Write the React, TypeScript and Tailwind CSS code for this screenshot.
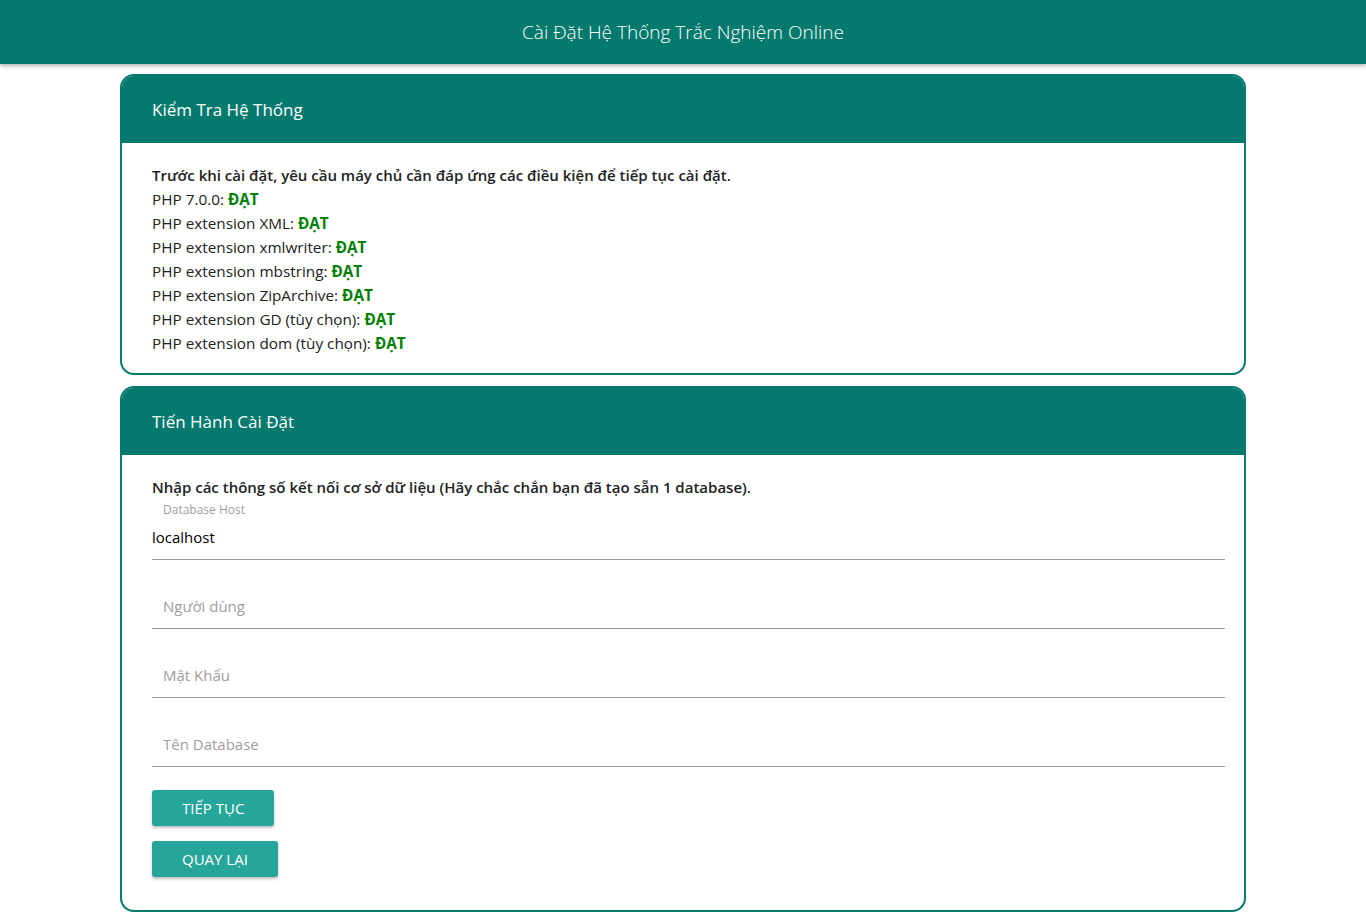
import React from 'react';

const checks = [
  'PHP 7.0.0:',
  'PHP extension XML:',
  'PHP extension xmlwriter:',
  'PHP extension mbstring:',
  'PHP extension ZipArchive:',
  'PHP extension GD (tùy chọn):',
  'PHP extension dom (tùy chọn):',
];

const fields = ['Người dùng', 'Mật Khẩu', 'Tên Database'];

export default function App() {
  return (
    <div className="min-h-screen bg-white text-[#212121] font-['Open_Sans','Noto_Sans',sans-serif]">
      <header className="h-16 bg-[#04796e] shadow-[0_2px_4px_rgba(0,0,0,0.3)] flex items-center justify-center">
        <h1 className="text-white text-[19px] font-light">Cài Đặt Hệ Thống Trắc Nghiệm Online</h1>
      </header>

      <main className="w-[1126px] mx-auto pt-[10px] flex flex-col gap-[11px]">
        <section className="border-2 border-[#04796e] rounded-[14px] overflow-hidden">
          <div className="h-[67px] bg-[#04796e] px-[30px] flex items-center text-white text-[17px]">
            Kiểm Tra Hệ Thống
          </div>
          <div className="px-[30px] pt-5 pb-[18px] text-[15.3px] leading-6">
            <p className="font-semibold text-[15px]">Trước khi cài đặt, yêu cầu máy chủ cần đáp ứng các điều kiện để tiếp tục cài đặt.</p>
            {checks.map((c) => (
              <p key={c}>
                {c} <b className="text-[#008000] font-bold">ĐẠT</b>
              </p>
            ))}
          </div>
        </section>

        <section className="border-2 border-[#04796e] rounded-[14px] overflow-hidden">
          <div className="h-[67px] bg-[#04796e] px-[30px] flex items-center text-white text-[17px]">
            Tiến Hành Cài Đặt
          </div>
          <div className="pl-[30px] pr-[19px] pt-5 pb-[33px] text-[15px]">
            <p className="font-semibold leading-6">Nhập các thông số kết nối cơ sở dữ liệu (Hãy chắc chắn bạn đã tạo sẵn 1 database).</p>
            <label className="block mt-[5px] pl-[11px] text-[12px] leading-3 text-[#9e9e9e]">Database Host</label>
            <input
              defaultValue="localhost"
              className="block w-full h-[44px] pb-[2px] border-b border-[#9e9e9e] outline-none text-[15px] text-black bg-transparent"
            />
            {fields.map((f) => (
              <input
                key={f}
                placeholder={f}
                className="block w-full mt-[25px] h-[44px] pb-[2px] border-b border-[#9e9e9e] outline-none pl-[11px] text-[15px] bg-transparent placeholder:text-[#9e9e9e]"
              />
            ))}
            <div className="mt-[23px] flex flex-col items-start gap-[15px]">
              <button className="h-9 px-[30px] rounded-[3px] bg-[#26a69a] text-white text-[15px] uppercase shadow-[0_2px_3px_rgba(0,0,0,0.25)]">
                Tiếp Tục
              </button>
              <button className="h-9 px-[30px] rounded-[3px] bg-[#26a69a] text-white text-[15px] uppercase shadow-[0_2px_3px_rgba(0,0,0,0.25)]">
                Quay Lại
              </button>
            </div>
          </div>
        </section>
      </main>
    </div>
  );
}
